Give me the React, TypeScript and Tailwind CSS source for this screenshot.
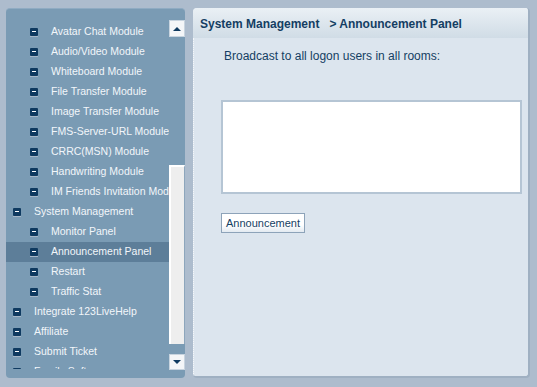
import React from "react";

const items: { label: string; level: 1 | 2; selected?: boolean }[] = [
  { label: "Avatar Chat Module", level: 2 },
  { label: "Audio/Video Module", level: 2 },
  { label: "Whiteboard Module", level: 2 },
  { label: "File Transfer Module", level: 2 },
  { label: "Image Transfer Module", level: 2 },
  { label: "FMS-Server-URL Module", level: 2 },
  { label: "CRRC(MSN) Module", level: 2 },
  { label: "Handwriting Module", level: 2 },
  { label: "IM Friends Invitation Module", level: 2 },
  { label: "System Management", level: 1 },
  { label: "Monitor Panel", level: 2 },
  { label: "Announcement Panel", level: 2, selected: true },
  { label: "Restart", level: 2 },
  { label: "Traffic Stat", level: 2 },
  { label: "Integrate 123LiveHelp", level: 1 },
  { label: "Affiliate", level: 1 },
  { label: "Submit Ticket", level: 1 },
  { label: "Family Software", level: 1 },
];

function MinusIcon() {
  return (
    <span className="relative flex h-[9px] w-[8px] shrink-0 flex-col">
      <span className="flex h-[8px] w-[8px] items-center justify-center rounded-[1px] bg-[#0f3a60]">
        <span className="h-[1px] w-[4px] bg-white" />
      </span>
      <span className="h-[1px] w-[8px] bg-[#a8b8c8]" />
    </span>
  );
}

export default function App() {
  return (
    <div
      className="flex h-[387px] w-[537px] gap-[8px] bg-[#adbccd] pl-[6px] pt-[8px]"
      style={{ fontFamily: '"Liberation Sans", Arial, sans-serif' }}
    >
      {/* Left panel */}
      <div className="flex h-[370px] w-[179px] rounded-[4px] border-t border-[#8fabc2] bg-[#7a9bb4]">
        <div className="mt-[13px] h-[347px] flex-1 overflow-hidden">
          {items.map((it) => (
            <div
              key={it.label}
              className={`flex h-[20px] items-center whitespace-nowrap text-[10.5px] text-[#f2f6fa] ${
                it.selected ? "bg-[#5d7e99]" : ""
              } ${it.level === 2 ? "pl-[24px]" : "pl-[7px]"}`}
            >
              <MinusIcon />
              <span className="ml-[13px]">{it.label}</span>
            </div>
          ))}
        </div>
        <div className="flex w-[16px] flex-col pt-[11px]">
          <div className="flex h-[17px] w-[16px] items-center justify-center border border-[#c8d4df] bg-[#f4f6f8]">
            <span className="h-0 w-0 border-x-[4px] border-b-[4px] border-x-transparent border-b-[#0f3a60]" />
          </div>
          <div className="mt-[128px] h-[179px] w-[16px] border-l-2 border-t-2 border-r border-white border-r-[#8da6bc] bg-[#eeeeee]" />
          <div className="mt-[10px] flex h-[16px] w-[16px] items-center justify-center border border-[#c8d4df] bg-[#f4f6f8]">
            <span className="h-0 w-0 border-x-[4px] border-t-[4px] border-x-transparent border-t-[#0f3a60]" />
          </div>
        </div>
      </div>

      {/* Right panel */}
      <div className="flex h-[370px] w-[337px] flex-col overflow-hidden rounded-[4px] border-b-2 border-r-2 border-b-[#9fb0c2] border-r-[#9fb0c2] bg-[#dce5ee]">
        <div className="flex h-[30px] items-center bg-gradient-to-b from-[#eaf0f5] to-[#d0dce6] pl-[7px] pt-[2px] text-[12px] font-bold text-[#143e63]">
          <span>System Management</span>
          <span className="ml-[10px]">&gt; Announcement Panel</span>
        </div>
        <div className="flex flex-1 flex-col border-l border-dotted border-l-[#f4f7fa] pl-[27px]">
          <div className="mt-[11px] pl-[3px] text-[12px] leading-[14px] text-[#143e63]">
            Broadcast to all logon users in all rooms:
          </div>
          <div className="mt-[37px] h-[94px] w-[301px] border-2 border-[#b5c5d4] bg-white" />
          <div className="mt-[16px]">
            <button className="h-[20px] w-[84px] border border-[#8da3b9] bg-gradient-to-b from-white from-60% to-[#e3eaf1] text-[11px] text-[#143e63]">
              Announcement
            </button>
          </div>
        </div>
      </div>
    </div>
  );
}
